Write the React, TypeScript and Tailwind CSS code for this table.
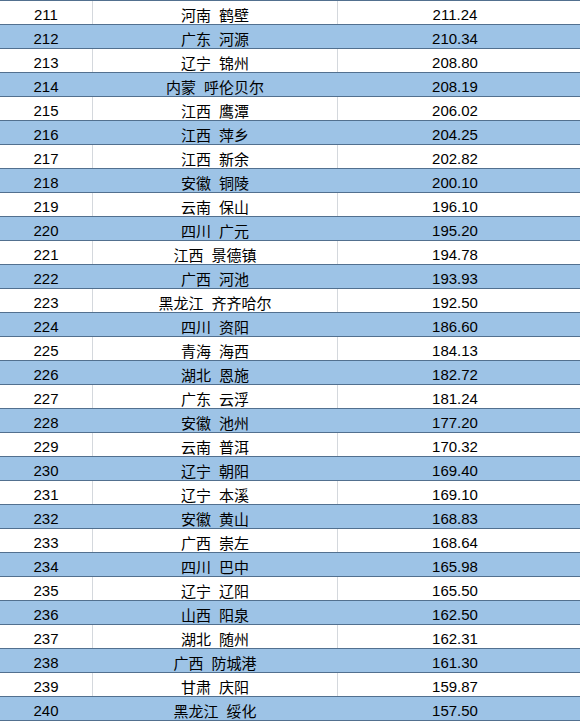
const rows: [number, string, string, string][] = [
    [211, "河南", "鹤壁", "211.24"],
    [212, "广东", "河源", "210.34"],
    [213, "辽宁", "锦州", "208.80"],
    [214, "内蒙", "呼伦贝尔", "208.19"],
    [215, "江西", "鹰潭", "206.02"],
    [216, "江西", "萍乡", "204.25"],
    [217, "江西", "新余", "202.82"],
    [218, "安徽", "铜陵", "200.10"],
    [219, "云南", "保山", "196.10"],
    [220, "四川", "广元", "195.20"],
    [221, "江西", "景德镇", "194.78"],
    [222, "广西", "河池", "193.93"],
    [223, "黑龙江", "齐齐哈尔", "192.50"],
    [224, "四川", "资阳", "186.60"],
    [225, "青海", "海西", "184.13"],
    [226, "湖北", "恩施", "182.72"],
    [227, "广东", "云浮", "181.24"],
    [228, "安徽", "池州", "177.20"],
    [229, "云南", "普洱", "170.32"],
    [230, "辽宁", "朝阳", "169.40"],
    [231, "辽宁", "本溪", "169.10"],
    [232, "安徽", "黄山", "168.83"],
    [233, "广西", "崇左", "168.64"],
    [234, "四川", "巴中", "165.98"],
    [235, "辽宁", "辽阳", "165.50"],
    [236, "山西", "阳泉", "162.50"],
    [237, "湖北", "随州", "162.31"],
    [238, "广西", "防城港", "161.30"],
    [239, "甘肃", "庆阳", "159.87"],
    [240, "黑龙江", "绥化", "157.50"],
];

export default function App() {
    return (
        <div className="w-[580px] h-[722px] bg-white text-black font-['Liberation_Sans','Noto_Sans_CJK_SC',sans-serif] text-[15px] leading-none">
            <div className="border-b border-[#52708f]">
                {rows.map(([rank, prov, city, score], i) => {
                    const blue = i % 2 === 1;
                    const line = blue ? "border-[#9dc3e6]" : "border-[#d4d8dd]";
                    return (
                        <div
                            key={rank}
                            className={`flex h-[24px] border-t border-[#52708f] ${blue ? "bg-[#9dc3e6]" : "bg-white"}`}
                        >
                            <div className={`w-[93px] flex items-center justify-center pt-[3px] border-r ${line}`}>
                                {rank}
                            </div>
                            <div className={`w-[245px] flex items-center justify-center pt-[3px] border-r ${line} font-['Noto_Sans_CJK_SC',sans-serif]`}>
                                <span>{prov}</span>
                                <span className="ml-[8px]">{city}</span>
                            </div>
                            <div className="flex-1 flex items-center justify-center pt-[3px] pr-[8px]">
                                {score}
                            </div>
                        </div>
                    );
                })}
            </div>
        </div>
    );
}
